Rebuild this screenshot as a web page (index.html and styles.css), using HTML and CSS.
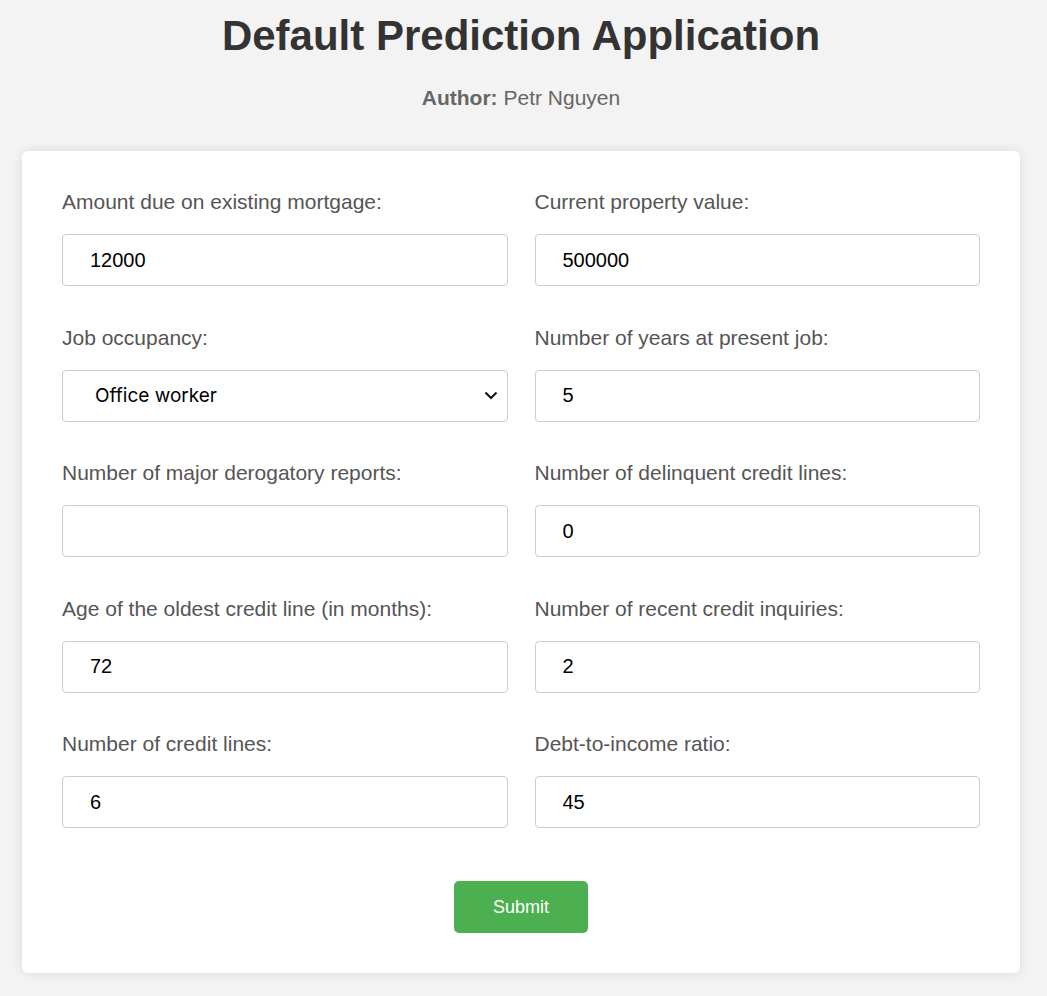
FILE: index.html
```html
<!DOCTYPE html>
<html lang="en">
<head>
<meta charset="utf-8">
<title>Default Prediction Application</title>
<link rel="stylesheet" href="styles.css">
</head>
<body>
<h1 class="title">Default Prediction Application</h1>
<p class="author"><strong>Author:</strong> Petr Nguyen</p>
<form class="card">
  <div class="grid">
    <div class="field">
      <label class="label">Amount due on existing mortgage:</label>
      <input class="input" type="text" value="12000">
    </div>
    <div class="field">
      <label class="label">Current property value:</label>
      <input class="input" type="text" value="500000">
    </div>
    <div class="field">
      <label class="label">Job occupancy:</label>
      <div class="select">
        <span class="select-text">Office worker</span>
        <svg class="chev" width="14" height="9" viewBox="0 0 14 9"><path d="M1.5 1.5 L7 7 L12.5 1.5" fill="none" stroke="#111" stroke-width="2"/></svg>
      </div>
    </div>
    <div class="field">
      <label class="label">Number of years at present job:</label>
      <input class="input" type="text" value="5">
    </div>
    <div class="field">
      <label class="label">Number of major derogatory reports:</label>
      <input class="input" type="text" value="">
    </div>
    <div class="field">
      <label class="label">Number of delinquent credit lines:</label>
      <input class="input" type="text" value="0">
    </div>
    <div class="field">
      <label class="label">Age of the oldest credit line (in months):</label>
      <input class="input" type="text" value="72">
    </div>
    <div class="field">
      <label class="label">Number of recent credit inquiries:</label>
      <input class="input" type="text" value="2">
    </div>
    <div class="field">
      <label class="label">Number of credit lines:</label>
      <input class="input" type="text" value="6">
    </div>
    <div class="field">
      <label class="label">Debt-to-income ratio:</label>
      <input class="input" type="text" value="45">
    </div>
  </div>
  <div class="actions">
    <button class="submit" type="button">Submit</button>
  </div>
</form>
</body>
</html>
```

FILE: styles.css
```css
html, body {
  margin: 0;
  padding: 0;
}
body {
  background: #f3f3f3;
  font-family: "Liberation Sans", Arial, sans-serif;
  padding: 0 27px 23px 22px;
}
.title {
  margin: 0;
  padding-top: 11px;
  text-align: center;
  font-size: 42px;
  line-height: 50px;
  font-weight: bold;
  color: #333;
}
.author {
  margin: 25px 0 41px 0;
  text-align: center;
  font-size: 21px;
  line-height: 24px;
  color: #666;
}
.card {
  background: #fff;
  border-radius: 6px;
  box-shadow: 0 0 12px rgba(0,0,0,0.1);
  padding: 39px 40px 40px 40px;
}
.grid {
  display: grid;
  grid-template-columns: 1fr 1fr;
  column-gap: 27px;
  row-gap: 39.5px;
}
.field {
  display: flex;
  flex-direction: column;
}
.label {
  font-size: 21px;
  line-height: 24px;
  color: #555;
  margin-bottom: 20px;
}
.input, .select {
  box-sizing: border-box;
  height: 52px;
  border: 1px solid #ccc;
  border-radius: 4px;
  background: #fff;
  font-family: "Liberation Sans", Arial, sans-serif;
  font-size: 20px;
  color: #000;
  padding: 0 27px;
  width: 100%;
  outline: none;
}
.select {
  display: flex;
  align-items: center;
  justify-content: space-between;
  padding: 0 9px 0 32px;
}
.select-text {
  font-family: "Inter", "Liberation Sans", sans-serif;
  font-size: 19px;
  color: #000;
}
.actions {
  display: flex;
  justify-content: center;
  margin-top: 53px;
}
.submit {
  width: 134px;
  height: 52px;
  background: #4caf50;
  color: #fff;
  border: none;
  border-radius: 5px;
  font-family: "Liberation Sans", Arial, sans-serif;
  font-size: 18px;
}
```
